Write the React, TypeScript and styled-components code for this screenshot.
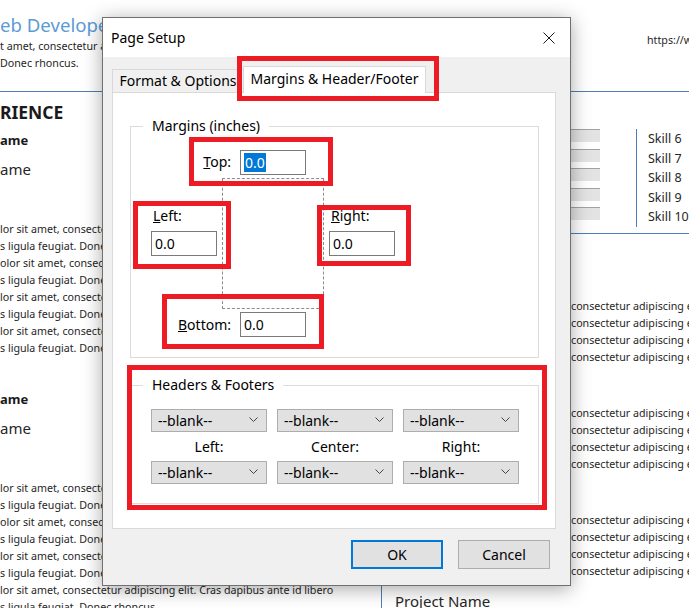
import styled, { createGlobalStyle } from 'styled-components'

const GlobalStyle = createGlobalStyle`
  html, body {
    margin: 0;
    padding: 0;
    background: #fff;
  }
  body {
    overflow: hidden;
    font-family: 'Noto Sans', 'Open Sans', sans-serif;
  }
`

const ruleColor = '#4f7db5'

const bulletLines = [
    'lor sit amet, consectetur adipiscing elit. Cras dapibus ante id libero',
    's ligula feugiat. Donec rhoncus.',
    'olor sit amet, consectetur adipiscing elit. Cras dapibus ante id libero',
    's ligula feugiat. Donec rhoncus.',
    'lor sit amet, consectetur adipiscing elit. Cras dapibus ante id libero',
    's ligula feugiat. Donec rhoncus.',
    'lor sit amet, consectetur adipiscing elit. Cras dapibus ante id libero',
    's ligula feugiat. Donec rhoncus.',
]

const jobs = [
    { id: 1, title: 'ame', role: 'ame', top: 6 },
    { id: 2, title: 'ame', role: 'ame', top: 32.5 },
]

const skillsLeft = ['Skill 1', 'Skill 2', 'Skill 3', 'Skill 4', 'Skill 5']
const skillsRight = ['Skill 6', 'Skill 7', 'Skill 8', 'Skill 9', 'Skill 10']

const projects = [1, 2, 3, 4]

const marks = [
    { id: 'tab', x: 134, y: 38, w: 202, h: 45 },
    { id: 'top', x: 86, y: 119, w: 144, h: 49 },
    { id: 'left', x: 30, y: 183, w: 98, h: 68 },
    { id: 'right', x: 214, y: 187, w: 94, h: 61 },
    { id: 'bottom', x: 59, y: 276, w: 162, h: 55 },
    { id: 'headers', x: 24, y: 347, w: 420, h: 145 },
]

function Chevron() {
    return (
        <svg width='9' height='5' viewBox='0 0 9 5'>
            <polyline points='0.5,0.5 4.5,4.5 8.5,0.5' fill='none' stroke='#444' strokeWidth='1' />
        </svg>
    )
}

function Blank() {
    return (
        <Select>
            <span>--blank--</span>
            <Chevron />
        </Select>
    )
}

export default function App() {
    return (
        <>
            <GlobalStyle />
            <Page>
                <Header>
                    <HeadLeft>
                        <Title>eb Developer</Title>
                        <Line>t amet, consectetur adipiscing elit. Cras dapibus ante id libero</Line>
                        <Line>Donec rhoncus.</Line>
                    </HeadLeft>
                    <HeadRight>https://www.example.com</HeadRight>
                </Header>

                <Columns>
                    <LeftCol>
                        <SectionTitle>RIENCE</SectionTitle>
                        {jobs.map(job => (
                            <Job key={job.id} $top={job.top}>
                                <JobTitle>{job.title}</JobTitle>
                                <JobRole>{job.role}</JobRole>
                                <Bullets>
                                    {bulletLines.map((text, i) => (
                                        <Line key={i}>{text}</Line>
                                    ))}
                                </Bullets>
                            </Job>
                        ))}
                    </LeftCol>

                    <RightCol>
                        <Skills>
                            <SkillList>
                                {skillsLeft.map(s => (
                                    <SkillRow key={s}>
                                        <span>{s}</span>
                                        <Bar />
                                    </SkillRow>
                                ))}
                            </SkillList>
                            <SkillList $divided>
                                {skillsRight.map(s => (
                                    <SkillRow key={s}>
                                        <span>{s}</span>
                                    </SkillRow>
                                ))}
                            </SkillList>
                        </Skills>
                        <Projects>
                            {projects.map(p => (
                                <Project key={p}>
                                    <ProjectName>Project Name</ProjectName>
                                    <ProjectLines>
                                        <Line>consectetur adipiscing elit.</Line>
                                        <Line>consectetur adipiscing elit.</Line>
                                        <Line>consectetur adipiscing elit.</Line>
                                        <Line>consectetur adipiscing elit.</Line>
                                    </ProjectLines>
                                </Project>
                            ))}
                        </Projects>
                    </RightCol>
                </Columns>

                <Dialog>
                    <TitleBar>
                        <span>Page Setup</span>
                        <svg width='12' height='12' viewBox='0 0 12 12'>
                            <path d='M0.5 0.5 L11.5 11.5 M11.5 0.5 L0.5 11.5' stroke='#1a1a1a' strokeWidth='1' />
                        </svg>
                    </TitleBar>

                    <DialogBody>
                        <Tabs>
                            <Tab $w={131}>Format &amp; Options</Tab>
                            <Tab $w={183} $active>Margins &amp; Header/Footer</Tab>
                        </Tabs>

                        <Panel>
                            <Group>
                                <legend>Margins (inches)</legend>
                                <MarginGrid>
                                    <EdgeRow $row={1}>
                                        <label><u>T</u>op:</label>
                                        <Field><Selected>0.0</Selected></Field>
                                    </EdgeRow>
                                    <SideGroup $col={1}>
                                        <label><u>L</u>eft:</label>
                                        <Field>0.0</Field>
                                    </SideGroup>
                                    <PageOutline />
                                    <SideGroup $col={3}>
                                        <label><u>R</u>ight:</label>
                                        <Field>0.0</Field>
                                    </SideGroup>
                                    <EdgeRow $row={3}>
                                        <label><u>B</u>ottom:</label>
                                        <Field>0.0</Field>
                                    </EdgeRow>
                                </MarginGrid>
                            </Group>

                            <Group $gap>
                                <legend>Headers &amp; Footers</legend>
                                <HFGrid>
                                    <Blank />
                                    <Blank />
                                    <Blank />
                                    <HFLabel>Left:</HFLabel>
                                    <HFLabel>Center:</HFLabel>
                                    <HFLabel>Right:</HFLabel>
                                    <Blank />
                                    <Blank />
                                    <Blank />
                                </HFGrid>
                            </Group>
                        </Panel>

                        <Buttons>
                            <Button $primary>OK</Button>
                            <Button>Cancel</Button>
                        </Buttons>
                    </DialogBody>

                    {marks.map(m => (
                        <Mark key={m.id} $x={m.x} $y={m.y} $w={m.w} $h={m.h} />
                    ))}
                </Dialog>
            </Page>
        </>
    )
}

const Page = styled.div`
    position: relative;
    width: 689px;
    height: 608px;
    overflow: hidden;
    color: #262626;
    font-size: 10.7px;
`

const Line = styled.div`
    line-height: 17px;
    white-space: nowrap;
`

const Header = styled.header`
    display: flex;
    justify-content: space-between;
    height: 91px;
    border-bottom: 1px solid ${ruleColor};
`

const HeadLeft = styled.div`
    flex: 1;
    min-width: 0;
    padding-top: 12px;
`

const Title = styled.div`
    font-size: 18.6px;
    line-height: 26px;
    color: #5b9bd5;
    white-space: nowrap;
`

const HeadRight = styled.div`
    flex: 0 0 42px;
    min-width: 0;
    padding-top: 31.5px;
    line-height: 17px;
    white-space: nowrap;
`

const Columns = styled.div`
    display: grid;
    grid-template-columns: 381px 308px;
`

const LeftCol = styled.div`
    padding-top: 8px;
`

const SectionTitle = styled.div`
    font-size: 17.5px;
    font-weight: 700;
    line-height: 24px;
    color: #1a1a1a;
`

const Job = styled.div<{ $top: number }>`
    margin-top: ${p => p.$top}px;
`

const JobTitle = styled.div`
    font-size: 13px;
    font-weight: 700;
    line-height: 20px;
    color: #1a1a1a;
`

const JobRole = styled.div`
    margin-top: 8px;
    font-size: 15px;
    line-height: 22px;
`

const Bullets = styled.div`
    margin-top: 40.5px;
`

const RightCol = styled.div`
    display: flex;
    flex-direction: column;
`

const Skills = styled.div`
    display: grid;
    grid-template-columns: 255px 1fr;
    padding: 37px 0 6.5px;
    border-bottom: 1px solid ${ruleColor};
`

const SkillList = styled.div<{ $divided?: boolean }>`
    padding: ${p => (p.$divided ? '0 0 0 11px' : '0 36px 0 14px')};
    border-left: ${p => (p.$divided ? `1px solid ${ruleColor}` : 'none')};
    font-size: 12.5px;
`

const SkillRow = styled.div`
    display: flex;
    justify-content: space-between;
    align-items: flex-start;
    height: 19.5px;
    line-height: 19.5px;
    white-space: nowrap;
`

const Bar = styled.div`
    width: 140px;
    height: 12px;
    border-top: 1px solid #a2a2a2;
    background: #e3e3e3;
`

const Projects = styled.div`
    padding-top: 35px;
    border-left: 1px solid ${ruleColor};
`

const Project = styled.div`
    margin-bottom: 10.5px;
`

const ProjectName = styled.div`
    padding-left: 13px;
    font-size: 15px;
    line-height: 22px;
`

const ProjectLines = styled.div`
    margin-top: 6.5px;
    padding-left: 189px;
`

/* dialog */

const Dialog = styled.div`
    position: absolute;
    left: 102px;
    top: 17px;
    width: 467px;
    height: 567px;
    display: flex;
    flex-direction: column;
    border: 1px solid #707070;
    background: #f0f0f0;
    box-shadow: 0 3px 18px rgba(0, 0, 0, 0.35);
    color: #000;
    font-size: 14px;
`

const TitleBar = styled.div`
    display: flex;
    align-items: center;
    justify-content: space-between;
    height: 39px;
    padding: 0 15px 0 8px;
    background: #fff;
    font-size: 14px;
`

const DialogBody = styled.div`
    flex: 1;
    display: flex;
    flex-direction: column;
    padding: 9px 14px 16px 9px;
`

const Tabs = styled.div`
    display: flex;
    align-items: flex-end;
    height: 26px;
`

const Tab = styled.div<{ $w: number; $active?: boolean }>`
    position: relative;
    z-index: 1;
    box-sizing: border-box;
    width: ${p => p.$w}px;
    height: ${p => (p.$active ? 27 : 23)}px;
    margin-bottom: ${p => (p.$active ? -1 : 0)}px;
    line-height: ${p => (p.$active ? 24 : 22)}px;
    text-align: center;
    white-space: nowrap;
    background: ${p => (p.$active ? '#fff' : '#f0f0f0')};
    border: 1px solid #d9d9d9;
    border-bottom: none;
    border-right: ${p => (p.$active ? '1px solid #d9d9d9' : 'none')};
`

const Panel = styled.div`
    flex: 1;
    padding: 23px 16px 0 17px;
    background: #fff;
    border: 1px solid #d9d9d9;
`

const Group = styled.fieldset<{ $gap?: boolean }>`
    margin: ${p => (p.$gap ? '17px 0 0' : '0')};
    padding: ${p => (p.$gap ? '14px 20px 19px' : '13px 20px 20px')};
    border: 1px solid #dcdcdc;
    min-width: 0;

    legend {
        margin-left: -8px;
        padding: 0 9px;
        line-height: 20px;
    }
`

const MarginGrid = styled.div`
    display: grid;
    grid-template-columns: 66px 102px 66px;
    grid-template-rows: 26px 131px 25px;
    column-gap: 5px;
    row-gap: 3px;
`

const EdgeRow = styled.div<{ $row: number }>`
    grid-column: 1 / 3;
    grid-row: ${p => p.$row};
    display: flex;
    align-items: center;
    justify-content: flex-end;
    gap: 9px;
    padding-right: 18px;
    line-height: 20px;
    white-space: nowrap;
`

const SideGroup = styled.div<{ $col: number }>`
    grid-column: ${p => p.$col};
    grid-row: 2;
    display: flex;
    flex-direction: column;
    gap: 5px;
    padding-top: 28px;
    line-height: 20px;

    label {
        padding-left: 2px;
    }
`

const Field = styled.div`
    box-sizing: border-box;
    display: flex;
    align-items: center;
    width: 66px;
    height: 25px;
    padding-left: 3px;
    border: 1px solid #7a7a7a;
    background: #fff;
`

const Selected = styled.span`
    padding: 0 1px;
    line-height: 19px;
    background: #0078d7;
    color: #fff;
`

const PageOutline = styled.div`
    grid-column: 2;
    grid-row: 2;
    border: 1px dashed #8c8c8c;
`

const HFGrid = styled.div`
    display: grid;
    grid-template-columns: repeat(3, 116px);
    grid-template-rows: 23px 29px 23px;
    column-gap: 10px;
`

const Select = styled.div`
    box-sizing: border-box;
    display: flex;
    align-items: center;
    justify-content: space-between;
    padding: 0 8px 0 6px;
    background: #e1e1e1;
    border: 1px solid #adadad;
    line-height: 21px;

    svg {
        margin-top: -3px;
    }
`

const HFLabel = styled.div`
    line-height: 29px;
    text-align: center;
`

const Buttons = styled.div`
    display: flex;
    justify-content: flex-end;
    gap: 15px;
    margin-top: 11px;
    padding-right: 6px;
`

const Button = styled.div<{ $primary?: boolean }>`
    box-sizing: border-box;
    display: flex;
    align-items: center;
    justify-content: center;
    width: 92px;
    height: 29px;
    background: #e1e1e1;
    border: ${p => (p.$primary ? '2px solid #0078d7' : '1px solid #adadad')};
`

const Mark = styled.div<{ $x: number; $y: number; $w: number; $h: number }>`
    position: absolute;
    left: ${p => p.$x}px;
    top: ${p => p.$y}px;
    width: ${p => p.$w}px;
    height: ${p => p.$h}px;
    box-sizing: border-box;
    border: 5px solid #ed1c24;
    pointer-events: none;
    z-index: 2;
`
